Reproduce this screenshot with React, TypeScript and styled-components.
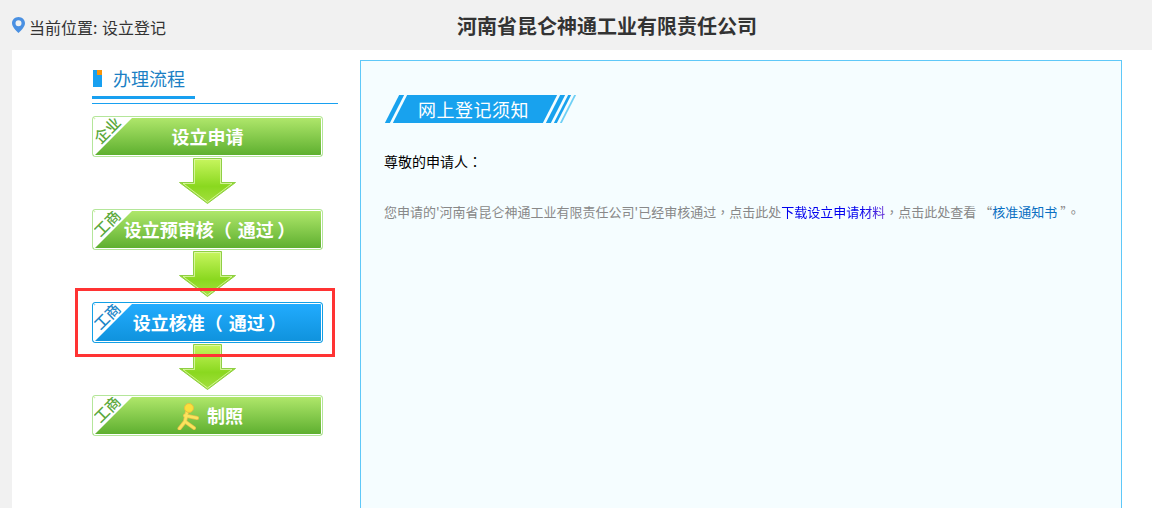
import styled, { createGlobalStyle } from 'styled-components';

const steps = [
  { tag: '企业', label: '设立申请' },
  { tag: '工商', label: '设立预审核（ 通过\u2009）', indent: true },
  { tag: '工商', label: '设立核准（ 通过\u2009）', indent: true, active: true },
  { tag: '工商', label: '制照', walker: true },
];

export default function App() {
  return (
    <>
      <GlobalStyle />
      <Header>
        <Location>
          <PinIcon />
          当前位置: 设立登记
        </Location>
        <Company>河南省昆仑神通工业有限责任公司</Company>
      </Header>
      <Main>
        <Sidebar>
          <SideTitle>
            <SideMark />
            办理流程
          </SideTitle>
          <Steps>
            {steps.map((step, i) => (
              <StepGroup key={step.label}>
                <StepButton $active={step.active}>
                  <Corner>
                    <CornerText $active={step.active}>{step.tag}</CornerText>
                  </Corner>
                  {step.walker && <WalkerIcon />}
                  <StepLabel $indent={step.indent}>{step.label}</StepLabel>
                  {step.active && <Highlight />}
                </StepButton>
                {i < steps.length - 1 && <ArrowIcon id={`arrow-${i}`} />}
              </StepGroup>
            ))}
          </Steps>
        </Sidebar>
        <Panel>
          <Banner>
            <Stripe $width={5} />
            <BannerBody>
              <BannerText>网上登记须知</BannerText>
            </BannerBody>
            <Stripe $width={5} />
            <Stripe $width={3} />
            <Stripe $width={2} $light />
          </Banner>
          <Greeting>
            尊敬的申请人<Punct>：</Punct>
          </Greeting>
          <Notice>
            您申请的'河南省昆仑神通工业有限责任公司'已经审核通过<Punct>，</Punct>点击此处
            <DownloadLink>下载设立申请材料</DownloadLink>
            <Punct>，</Punct>点击此处查看 “<NoticeLink>核准通知书</NoticeLink> ”<Punct>。</Punct>
          </Notice>
        </Panel>
      </Main>
    </>
  );
}

function PinIcon() {
  return (
    <Pin viewBox="0 0 13 16" width="13" height="16">
      <path
        fillRule="evenodd"
        d="M6.5 0C2.9 0 0 2.8 0 6.3 0 10.6 6.5 16 6.5 16S13 10.6 13 6.3C13 2.8 10.1 0 6.5 0Zm0 9.2a3 3 0 1 1 0-6 3 3 0 0 1 0 6Z"
        fill="#4a90e2"
      />
    </Pin>
  );
}

function ArrowIcon({ id }: { id: string }) {
  return (
    <Arrow viewBox="0 0 57 46" width="57" height="46">
      <defs>
        <linearGradient id={id} x1="0" y1="0" x2="0" y2="1">
          <stop offset="0" stopColor="#c8f65f" />
          <stop offset="0.62" stopColor="#8ad81f" />
          <stop offset="1" stopColor="#a4e040" />
        </linearGradient>
      </defs>
      <path
        d="M14.5.5h28v24h14L28.5 45.5.5 24.500h14Z"
        fill={`url(#${id})`}
        stroke="#8fcf45"
      />
      <path d="M15.500 1.500h26v24h11.500L28.500 44 4 25.500h11.500Z" fill="none" stroke="#e6f9b8" strokeOpacity="0.75" />
    </Arrow>
  );
}

function WalkerIcon() {
  return (
    <Walker viewBox="0 0 24 28" width="24" height="28">
      <g fill="none" stroke="#e6bf4c" strokeWidth="4" strokeLinecap="round" strokeLinejoin="round">
        <path d="M12 10l-2 9.500L4.500 26.500M10 19.500l9 6.500M10 13.500l12 2.500" />
      </g>
      <g fill="none" stroke="#fae45c" strokeWidth="2.500" strokeLinecap="round" strokeLinejoin="round">
        <path d="M12 10l-2 9.500L4.500 26.500M10 19.500l9 6.500M10 13.500l12 2.500" />
      </g>
      <circle cx="14" cy="6" r="4.500" fill="#fadf3c" stroke="#e8c040" />
    </Walker>
  );
}

const GlobalStyle = createGlobalStyle`
  html, body {
    margin: 0;
    height: 100%;
    overflow: hidden;
    background: #f1f1f1;
    font-family: "Noto Sans CJK SC", "Liberation Sans", sans-serif;
  }
`;

const Header = styled.header`
  height: 50px;
  display: flex;
  align-items: center;
  padding: 5px 0 0 12px;
  box-sizing: border-box;
`;

const Location = styled.div`
  display: flex;
  align-items: center;
  gap: 4px;
  font-size: 16px;
  word-spacing: 1px;
  margin-top: -2px;
  color: #333;
`;

const Pin = styled.svg`
  display: block;
  margin-top: -3px;
`;

const Company = styled.h1`
  margin: -4px 0 0 291px;
  font-size: 20px;
  line-height: 28px;
  font-weight: 700;
  color: #333;
`;

const Main = styled.main`
  margin-left: 12px;
  height: 458px;
  background: #fff;
  display: flex;
  padding: 10px 0 0 80px;
  box-sizing: border-box;
  gap: 22px;
  overflow: hidden;
`;

const Sidebar = styled.aside`
  width: 246px;
  flex: none;
`;

const SideTitle = styled.div`
  display: flex;
  align-items: center;
  gap: 11px;
  width: 103px;
  height: 39px;
  padding-left: 1px;
  box-sizing: border-box;
  white-space: nowrap;
  font-size: 18px;
  color: #1b7fc4;
  border-bottom: 3px solid #18a0f0;
`;

const SideMark = styled.span`
  width: 9px;
  height: 17px;
  flex: none;
  background: linear-gradient(#f7940c, #f7940c) top right / 5px 5px no-repeat, #18a0f0;
`;

const Steps = styled.div`
  border-top: 1px solid #18a0f0;
  margin-top: 4px;
  padding-top: 12px;
  display: flex;
  flex-direction: column;
`;

const StepGroup = styled.div`
  display: flex;
  flex-direction: column;
  width: 231px;
  align-items: center;
`;

const StepButton = styled.div<{ $active?: boolean }>`
  position: relative;
  width: 231px;
  height: 41px;
  box-sizing: border-box;
  display: flex;
  align-items: center;
  justify-content: center;
  gap: 8px;
  border-radius: 3px;
  border: 1px solid ${({ $active }) => ($active ? '#12a0e6' : '#b4e69a')};
  box-shadow: inset 0 0 0 1px #fff;
  background: ${({ $active }) =>
    $active ? 'linear-gradient(#22acff, #0f92dc)' : 'linear-gradient(#b1e86c, #5cae2e)'};
`;

const Corner = styled.span`
  position: absolute;
  left: 1px;
  top: 1px;
  width: 38px;
  height: 38px;
  background: #fff;
  clip-path: polygon(0 0, 100% 0, 0 100%);
  border-top-left-radius: 2px;
`;

const CornerText = styled.span<{ $active?: boolean }>`
  position: absolute;
  left: -3px;
  top: 4px;
  width: 32px;
  text-align: center;
  transform: rotate(-45deg);
  font-size: 15px;
  line-height: 16px;
  font-weight: 500;
  color: ${({ $active }) => ($active ? '#1c86c8' : '#5aa83a')};
`;

const StepLabel = styled.span<{ $indent?: boolean }>`
  position: relative;
  padding: 0 0 2px ${({ $indent }) => ($indent ? '4px' : '0')};
  font-size: 18px;
  line-height: 26px;
  font-weight: 700;
  word-spacing: 2px;
  color: #fff;
  white-space: pre;
`;

const Highlight = styled.span`
  position: absolute;
  left: -18px;
  top: -15px;
  width: 254px;
  height: 63px;
  border: 3px solid #ff3333;
  pointer-events: none;
`;

const Arrow = styled.svg`
  display: block;
  margin: 1px 0 5px;
`;

const Walker = styled.svg`
  display: block;
  margin-left: 3px;
`;

const Panel = styled.section`
  width: 762px;
  height: 520px;
  flex: none;
  box-sizing: border-box;
  border: 1px solid #5fc8f8;
  background: #f5fdff;
  padding: 34px 23px 0;
`;

const Banner = styled.div`
  display: flex;
  align-items: stretch;
  height: 28px;
  gap: 3px;
  margin-left: 8px;
`;

const Stripe = styled.span<{ $width: number; $light?: boolean }>`
  width: ${({ $width }) => $width}px;
  flex: none;
  transform: skewX(-27deg);
  background: ${({ $light }) => ($light ? '#6fd0f5' : '#18a2ee')};
`;

const BannerBody = styled.span`
  width: 150px;
  flex: none;
  display: flex;
  align-items: center;
  justify-content: center;
  padding-right: 3px;
  box-sizing: border-box;
  transform: skewX(-27deg);
  background: #18a2ee;
`;

const BannerText = styled.span`
  transform: skewX(27deg);
  font-size: 18px;
  letter-spacing: 0.5px;
  color: #fff;
  white-space: nowrap;
`;

const Greeting = styled.p`
  margin: 27px 0 0;
  font-size: 14px;
  line-height: 22px;
  color: #000;
`;

const Notice = styled.p`
  margin: 29px 0 0;
  font-size: 13px;
  line-height: 22px;
  color: #888;
  white-space: nowrap;
`;

const Punct = styled.span`
  font-family: "Noto Sans CJK TC", sans-serif;
`;

const DownloadLink = styled.span`
  color: transparent;
  background: linear-gradient(90deg, #0000ee 75%, #6a35d8);
  background-clip: text;
`;

const NoticeLink = styled.span`
  color: #0a6fc2;
`;
